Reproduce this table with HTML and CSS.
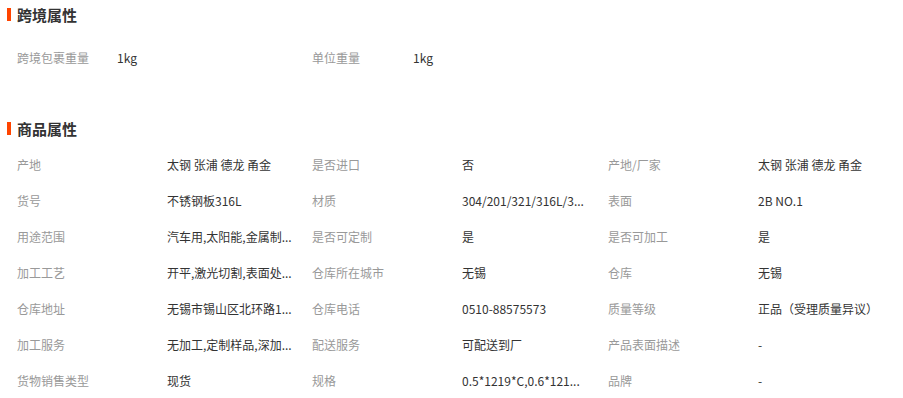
FILE: index.html
```html
<!DOCTYPE html>
<html lang="zh-CN">
<head>
<meta charset="utf-8">
<title>属性</title>
<link rel="stylesheet" href="styles.css">
</head>
<body>
<section class="block">
  <h2 class="block-title">跨境属性</h2>
  <div class="cb-grid">
    <div class="lbl">跨境包裹重量</div><div class="val">1kg</div>
    <div class="lbl">单位重量</div><div class="val">1kg</div>
  </div>
</section>
<section class="block block-goods">
  <h2 class="block-title">商品属性</h2>
  <div class="attr-grid">
    <div class="lbl">产地</div><div class="val">太钢 张浦 德龙 甬金</div>
    <div class="lbl">是否进口</div><div class="val">否</div>
    <div class="lbl">产地/厂家</div><div class="val">太钢 张浦 德龙 甬金</div>

    <div class="lbl">货号</div><div class="val">不锈钢板316L</div>
    <div class="lbl">材质</div><div class="val">304/201/321/316L/3...</div>
    <div class="lbl">表面</div><div class="val">2B NO.1</div>

    <div class="lbl">用途范围</div><div class="val">汽车用,太阳能,金属制...</div>
    <div class="lbl">是否可定制</div><div class="val">是</div>
    <div class="lbl">是否可加工</div><div class="val">是</div>

    <div class="lbl">加工工艺</div><div class="val">开平,激光切割,表面处...</div>
    <div class="lbl">仓库所在城市</div><div class="val">无锡</div>
    <div class="lbl">仓库</div><div class="val">无锡</div>

    <div class="lbl">仓库地址</div><div class="val">无锡市锡山区北环路1...</div>
    <div class="lbl">仓库电话</div><div class="val">0510-88575573</div>
    <div class="lbl">质量等级</div><div class="val">正品（受理质量异议）</div>

    <div class="lbl">加工服务</div><div class="val">无加工,定制样品,深加...</div>
    <div class="lbl">配送服务</div><div class="val">可配送到厂</div>
    <div class="lbl">产品表面描述</div><div class="val">-</div>

    <div class="lbl">货物销售类型</div><div class="val">现货</div>
    <div class="lbl">规格</div><div class="val">0.5*1219*C,0.6*121...</div>
    <div class="lbl">品牌</div><div class="val">-</div>
  </div>
</section>
</body>
</html>
```
FILE: styles.css
```css
html, body {
  margin: 0;
  padding: 0;
  background: #fff;
}
body {
  font-family: "Noto Sans CJK SC", "Microsoft YaHei", sans-serif;
  font-size: 12px;
  color: #333;
  width: 903px;
  height: 398px;
  overflow: hidden;
}
.block-title {
  margin: 0;
  display: flex;
  align-items: center;
  gap: 6px;
  padding-left: 7px;
  height: 28px;
  font-size: 15px;
  font-weight: bold;
  color: #333;
}
.block-title::before {
  content: "";
  width: 4px;
  height: 13px;
  background: #ff4400;
}
.cb-grid {
  margin-top: 11px;
  padding-left: 17px;
  display: grid;
  grid-template-columns: 100px 195px 101px 1fr;
  grid-auto-rows: 36px;
  align-items: center;
}
.block-goods {
  margin-top: 39px;
}
.attr-grid {
  margin-top: 4px;
  padding-left: 17px;
  display: grid;
  grid-template-columns: 150px 145px 150px 146px 150px 1fr;
  grid-auto-rows: 36px;
  align-items: center;
}
.lbl {
  color: #999;
  white-space: nowrap;
}
.val {
  color: #333;
  white-space: nowrap;
  overflow: hidden;
}
```
